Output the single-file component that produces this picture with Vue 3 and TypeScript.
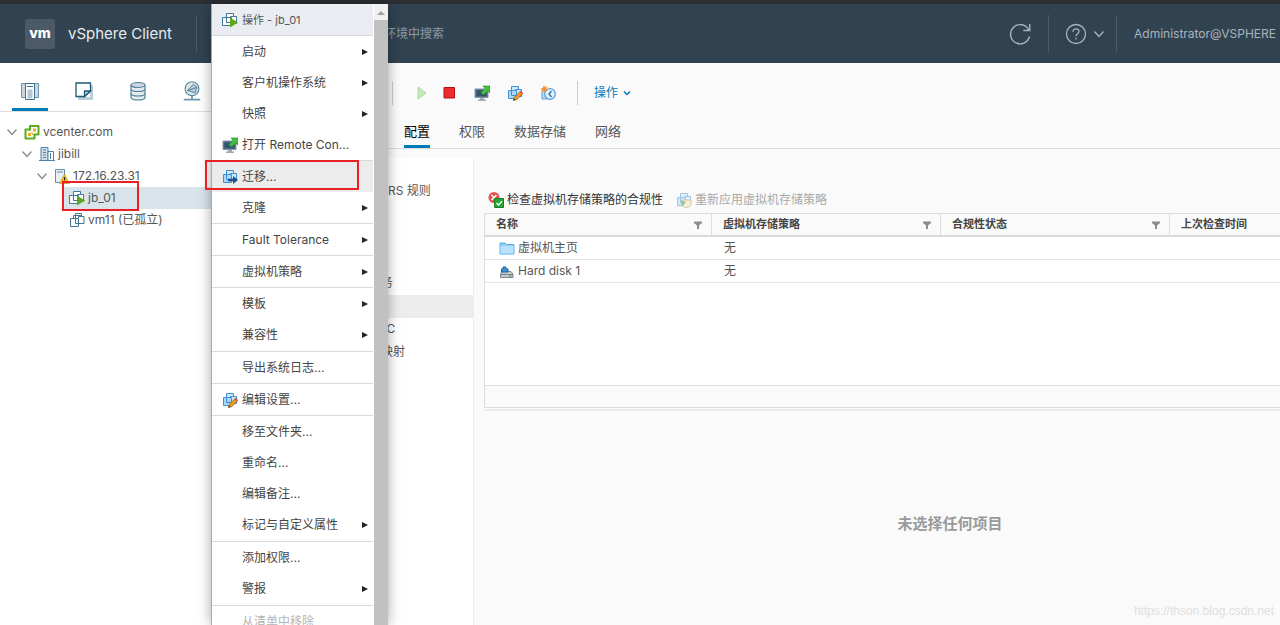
<script setup lang="ts">
import { ref } from 'vue'

interface MenuItem {
  label: string
  icon?: string
  sub?: boolean
  active?: boolean
  disabled?: boolean
}

interface MenuGroup {
  roomy?: boolean
  items: MenuItem[]
}

interface TreeNode {
  label: string
  icon: string
  depth: number
  open?: boolean
  selected?: boolean
}

const search = ref('')

const views = [
  { label: '主机和集群', icon: 'hosts', active: true },
  { label: '虚拟机和模板', icon: 'templates', active: false },
  { label: '存储', icon: 'storage', active: false },
  { label: '网络', icon: 'network', active: false },
]

const tree: TreeNode[] = [
  { label: 'vcenter.com', icon: 'vcenter', depth: 0, open: true },
  { label: 'jibill', icon: 'datacenter', depth: 1, open: true },
  { label: '172.16.23.31', icon: 'host-warn', depth: 2, open: true },
  { label: 'jb_01', icon: 'vm-on', depth: 3, selected: true },
  { label: 'vm11 (已孤立)', icon: 'vm', depth: 3 },
]

const menu: MenuGroup[] = [
  {
    items: [
      { label: '启动', sub: true },
      { label: '客户机操作系统', sub: true },
      { label: '快照', sub: true },
      { label: '打开 Remote Con...', icon: 'console' },
    ],
  },
  { items: [{ label: '迁移...', icon: 'migrate', active: true }, { label: '克隆', sub: true }] },
  { items: [{ label: 'Fault Tolerance', sub: true }] },
  { items: [{ label: '虚拟机策略', sub: true }] },
  { roomy: true, items: [{ label: '模板', sub: true }, { label: '兼容性', sub: true }] },
  { items: [{ label: '导出系统日志...' }] },
  { items: [{ label: '编辑设置...', icon: 'edit' }] },
  {
    roomy: true,
    items: [
      { label: '移至文件夹...' },
      { label: '重命名...' },
      { label: '编辑备注...' },
      { label: '标记与自定义属性', sub: true },
    ],
  },
  { roomy: true, items: [{ label: '添加权限...' }, { label: '警报', sub: true }] },
  { items: [{ label: '从清单中移除', disabled: true }] },
]

const tools = [
  { label: '启动', icon: 'play' },
  { label: '关闭', icon: 'stop' },
  { label: '控制台', icon: 'console' },
  { label: '编辑设置', icon: 'edit' },
  { label: '生成快照', icon: 'snapshot' },
]

const tabs = ['配置', '权限', '数据存储', '网络']

const settings = [
  'vSphere SDRS 规则',
  'vApp 选项',
  '',
  '警报定义',
  '已调度的任务',
  '策略',
  'VMware EVC',
  '客户机用户映射',
]

const columns = ['名称', '虚拟机存储策略', '合规性状态', '上次检查时间']

const rows = [
  { name: '虚拟机主页', icon: 'folder', policy: '无' },
  { name: 'Hard disk 1', icon: 'disk', policy: '无' },
]
</script>

<template>
  <svg class="sprite" aria-hidden="true">
    <symbol id="i-hosts" viewBox="0 0 20 20">
      <path d="M1.500 2.500h5v14h-5zM13.500 2.500h5v14h-5z" fill="#c9d8e1" stroke="#6d94aa" />
      <path d="M5.500 2.500h9v16h-9z" fill="#fff" stroke="#3f7290" />
      <path d="M7.500 8.500h5v9h-5z" fill="#b3c8d4" />
      <path d="M7 5.500h6" stroke="#3f7290" />
    </symbol>
    <symbol id="i-templates" viewBox="0 0 20 20">
      <path d="M16 4h3v15h-15v-3h12z" fill="#bccdd7" />
      <path d="M2 2h14.500v8l-6 5.500h-8.500z" fill="#fff" stroke="#1f5876" stroke-width="1.300" />
      <path d="M16.500 10h-6v5.500z" fill="#bccdd7" stroke="#1f5876" stroke-width="1.300" />
    </symbol>
    <symbol id="i-storage" viewBox="0 0 20 20">
      <path d="M3 4v12.500c0 1.500 3 2.500 7 2.500s7-1 7-2.500v-12.500" fill="#e3ebf0" stroke="#55829b" stroke-width="1.200" />
      <ellipse cx="10" cy="4" rx="7" ry="2.500" fill="#c9d8e1" stroke="#55829b" stroke-width="1.200" />
      <path d="M3 8c0 1.500 3 2.500 7 2.500s7-1 7-2.500M3 12.500c0 1.500 3 2.500 7 2.500s7-1 7-2.500" fill="none" stroke="#55829b" stroke-width="1.200" />
    </symbol>
    <symbol id="i-network" viewBox="0 0 20 22">
      <circle cx="10" cy="8.500" r="7.600" fill="#dfe8ee" stroke="#55829b" stroke-width="1.200" />
      <path d="M5 10.500l6.500-7 4 3.500zM5 10.500l8.500 2.500 2-6" fill="#b9cdd8" stroke="#4a7a94" />
      <path d="M10 16v4M1 20.500h18" stroke="#6f95aa" stroke-width="2" />
    </symbol>
    <symbol id="i-vcenter" viewBox="0 0 16 16">
      <path d="M6 2h8.500v8.500h-4v4h-9v-9h4.500z" fill="#fff" stroke="#5cae1c" stroke-width="2" stroke-linejoin="round" />
      <path d="M6 5.500v2M8.500 10.500h2" fill="none" stroke="#5cae1c" />
      <path d="M9 4.500h3v3h-3zM4 9h3v3h-3z" fill="#f5a623" />
      <path d="M7 8h2v2h-2z" fill="#f9c878" />
    </symbol>
    <symbol id="i-datacenter" viewBox="0 0 16 16">
      <path d="M2 1.500h7v13h-7z" fill="#cfdee8" stroke="#4f83a0" />
      <path d="M9 5.500h5.500v9h-5.500z" fill="#fff" stroke="#4f83a0" />
      <path d="M4 4h3M4 6.500h3M4 9h3M4 11.500h3M11.500 7v6" stroke="#4f83a0" />
      <path d="M0 14.500h16" stroke="#4f83a0" />
    </symbol>
    <symbol id="i-host-warn" viewBox="0 0 16 16">
      <path d="M1.500 1.500h9v13h-9z" fill="#e6eff4" stroke="#5f8fa9" />
      <path d="M3 4h6" stroke="#5f8fa9" />
      <path d="M10.500 6l5 9.500h-10z" fill="#ffc61a" stroke="#c48a00" stroke-width=".6" />
      <path d="M10.500 9v3.500M10.500 13.300v1.200" stroke="#222" stroke-width="1.200" />
    </symbol>
    <symbol id="i-vm" viewBox="0 0 16 16">
      <path d="M6.500 1.500h6v3h2.500v7h-8.500z" fill="#fff" stroke="#3f7795" />
      <path d="M1.500 6.500h8v8h-8z" fill="#fff" stroke="#3f7795" />
      <path d="M4.500 6.500v-3h7.500M6.500 6.500v5h3M12.500 4.500h-3v3" fill="none" stroke="#3f7795" />
    </symbol>
    <symbol id="i-vm-on" viewBox="0 0 16 16">
      <path d="M4.500 1.500h7v3h3v7h-10z" fill="#fff" stroke="#3f7795" />
      <path d="M.5 5.500h9v8h-9z" fill="#fff" stroke="#3f7795" />
      <path d="M4.500 5.500v5h5M8.500 5.500v-1h3" fill="none" stroke="#3f7795" />
      <path d="M8 5.500l8 5-8 5z" fill="#5fa51e" />
    </symbol>
    <symbol id="i-console" viewBox="0 0 16 16">
      <path d="M1 4h13v8.500h-13z" fill="#526b82" stroke="#8395a5" />
      <path d="M2.500 5.500h10v5.500h-10z" fill="#33536f" />
      <path d="M6 13h4v1.500h2v1.500h-8v-1.500h2z" fill="#9caab6" />
      <path d="M9 1h7v7l-2.200-2.200-4.300 4.200-2.500-2.500 4.200-4.200z" fill="#3fc43a" stroke="#1f8f1f" stroke-width=".7" />
    </symbol>
    <symbol id="i-vmblue" viewBox="0 0 16 16">
      <path d="M4.500 1.500h7v3h3v7h-10z" fill="#cfe8fb" stroke="#3d8fd8" />
      <path d="M1.500 5.500h8v8h-8z" fill="#aed8f8" stroke="#3d8fd8" />
      <path d="M4.500 5.500v5h5M8.500 5.500v-1h3" fill="none" stroke="#3d8fd8" />
    </symbol>
    <symbol id="i-edit" viewBox="0 0 16 16">
      <use href="#i-vmblue" />
      <path d="M6.500 15.500l.8-3.200 6-6 2.400 2.400-6 6z" fill="#f39a1e" stroke="#7a4a10" stroke-width=".6" />
      <path d="M12.500 7l2.300 2.300 1.200-1.200-2.300-2.300z" fill="#e0474c" />
      <path d="M6.500 15.500l.5-1.800 1.300 1.300z" fill="#222" />
    </symbol>
    <symbol id="i-migrate" viewBox="0 0 16 16">
      <use href="#i-vmblue" />
      <path d="M6 9.800h5v-2.800l5 4-5 4v-2.800h-5z" fill="#1d4f91" />
    </symbol>
    <symbol id="i-snapshot" viewBox="0 0 16 16">
      <path d="M2 5h5v9h-5z" fill="#b9dcf8" stroke="#5b9fdc" />
      <circle cx="10" cy="9" r="5.300" fill="#e2f1fd" stroke="#5b9fdc" stroke-width="1.300" />
      <path d="M11.500 6l-2.500 3 2.500 3" fill="none" stroke="#2d6dab" stroke-width="1.300" />
      <path d="M4 0l1 2.200 2.400-.8-1 2.300 2 1.300-2.500.6-.4 2.400-1.600-1.900-2.200 1 .7-2.300-2-1.300 2.400-.5z" fill="#f5912c" />
    </symbol>
    <symbol id="i-play" viewBox="0 0 16 16">
      <path d="M4 2l8 6-8 6z" fill="#c4e9bd" stroke="#a9d8a2" />
    </symbol>
    <symbol id="i-stop" viewBox="0 0 16 16">
      <path d="M3 2.500h10.500v10.500h-10.500z" fill="#ee2a2a" stroke="#b01212" />
    </symbol>
    <symbol id="i-check" viewBox="0 0 16 16">
      <circle cx="6" cy="5.500" r="5.500" fill="#ea4f4f" />
      <path d="M3.500 3l5 5M8.500 3l-5 5" stroke="#fff" stroke-width="1.500" />
      <path d="M6.500 6.500h9v9h-9z" fill="#27a736" stroke="#148022" />
      <path d="M8.500 11l2 2 3.500-3.700" fill="none" stroke="#fff" stroke-width="1.400" />
    </symbol>
    <symbol id="i-reapply" viewBox="0 0 16 16">
      <g opacity=".5">
        <use href="#i-vmblue" />
        <path d="M6 8h9v4c0 2-2 3.500-4.500 3.500s-4.500-1.500-4.500-3.500z" fill="#f3e3b0" stroke="#a8935a" />
        <path d="M5 8l5 2-4 5z" fill="#3c9a3c" />
      </g>
    </symbol>
    <symbol id="i-folder" viewBox="0 0 16 16">
      <path d="M1 3h5l1.500 1.500h7.500v9.500h-14z" fill="#8fcdf5" stroke="#5baee6" />
      <path d="M1.500 6h13v7.500h-13z" fill="#b9e1fb" />
    </symbol>
    <symbol id="i-disk" viewBox="0 0 16 16">
      <path d="M3 8.500h9l2 2.500v3.500h-12.500v-3.500z" fill="#c6cbd0" stroke="#7b848c" />
      <path d="M2 11.500h12" stroke="#7b848c" />
      <path d="M10 13h2.500" stroke="#3fa53f" />
      <path d="M4 4h3v2h2v3h-6.500v-3h1.500z" fill="#3d8fd8" stroke="#1f62a8" />
    </symbol>
    <symbol id="i-chevron" viewBox="0 0 12 12">
      <path d="M1.500 3.500l4.500 5 4.500-5" fill="none" stroke="currentColor" stroke-width="1.300" />
    </symbol>
    <symbol id="i-chevron-bold" viewBox="0 0 8 8">
      <path d="M1 2.500l3 3 3-3" fill="none" stroke="currentColor" stroke-width="1.500" />
    </symbol>
    <symbol id="i-filter" viewBox="0 0 8 8">
      <path d="M0 0.500h8v1.500l-3 2.500v3.500h-2v-3.500l-3-2.500z" fill="#8c8c8c" />
    </symbol>
  </svg>

  <div class="page">
    <header class="top">
      <div class="logo">vm</div>
      <div class="brand">vSphere Client</div>
      <input v-model="search" class="search" type="search" aria-label="搜索" placeholder="在所有环境中搜索" />
      <button class="top-btn refresh" aria-label="刷新">
        <svg width="22" height="22" viewBox="0 0 22 22" fill="none" stroke="currentColor" stroke-width="1.400">
          <path d="M20.500 13.500a9.600 9.600 0 1 1-.7-6.500M20.800 1v6.500h-6.500" />
        </svg>
      </button>
      <button class="top-btn help" aria-label="帮助">
        <svg width="22" height="22" viewBox="0 0 22 22" fill="none" stroke="currentColor" stroke-width="1.300">
          <circle cx="11" cy="11" r="9.500" />
          <path d="M8 8.700c0-1.800 1.300-2.900 3-2.900s3 1.100 3 2.700c0 2.200-3 2.300-3 4.800M11 14.800v1.700" />
        </svg>
        <svg width="12" height="12"><use href="#i-chevron" /></svg>
      </button>
      <button class="user">Administrator@VSPHERE</button>
    </header>

    <div class="body">
      <aside class="side">
        <nav class="views">
          <button v-for="v in views" :key="v.icon" :class="['view', { on: v.active }]" :aria-label="v.label">
            <svg width="20" height="20"><use :href="'#i-' + v.icon" /></svg>
          </button>
        </nav>
        <ul class="tree">
          <li v-for="n in tree" :key="n.label" :class="['node', 'd' + n.depth, { sel: n.selected }]">
            <svg v-if="n.open" class="twist" width="12" height="12"><use href="#i-chevron" /></svg>
            <svg width="16" height="16"><use :href="'#i-' + n.icon" /></svg>
            <a href="#">{{ n.label }}</a>
          </li>
        </ul>
      </aside>

      <main class="main">
        <div class="tools">
          <button v-for="t in tools" :key="t.icon" class="tool" :aria-label="t.label">
            <svg width="16" height="16"><use :href="'#i-' + t.icon" /></svg>
          </button>
          <button class="actions">
            操作
            <svg width="8" height="8"><use href="#i-chevron-bold" /></svg>
          </button>
        </div>
        <nav class="tabs">
          <a v-for="(t, i) in tabs" :key="t" href="#" :class="{ on: i === 0 }">{{ t }}</a>
        </nav>
        <div class="config">
          <ul class="settings">
            <li v-for="(s, i) in settings" :key="i" :class="{ sel: s === '策略' }">{{ s }}</li>
          </ul>
          <section class="policy">
            <div class="policy-tools">
              <button>
                <svg width="16" height="16"><use href="#i-check" /></svg>
                检查虚拟机存储策略的合规性
              </button>
              <button disabled>
                <svg width="16" height="16"><use href="#i-reapply" /></svg>
                重新应用虚拟机存储策略
              </button>
            </div>
            <div class="grid">
              <table>
                <colgroup>
                  <col class="c1" />
                  <col class="c2" />
                  <col class="c2" />
                  <col />
                </colgroup>
                <thead>
                  <tr>
                    <th v-for="(c, i) in columns" :key="c">
                      <div class="th">
                        {{ c }}
                        <svg v-if="i < 3" width="8" height="8"><use href="#i-filter" /></svg>
                      </div>
                    </th>
                  </tr>
                </thead>
                <tbody>
                  <tr v-for="r in rows" :key="r.name">
                    <td>
                      <div class="name">
                        <svg width="16" height="16"><use :href="'#i-' + r.icon" /></svg>
                        {{ r.name }}
                      </div>
                    </td>
                    <td>{{ r.policy }}</td>
                    <td></td>
                    <td></td>
                  </tr>
                </tbody>
              </table>
              <div class="grid-foot"></div>
            </div>
            <div class="empty">未选择任何项目</div>
          </section>
        </div>
      </main>
    </div>

    <div class="menu">
      <div class="menu-list">
        <div class="menu-head">
          <svg width="16" height="16"><use href="#i-vm-on" /></svg>
          操作 - jb_01
        </div>
        <ul v-for="(g, gi) in menu" :key="gi" :class="['group', { roomy: g.roomy }]">
          <li v-for="m in g.items" :key="m.label">
            <button :class="['item', { active: m.active }]" :disabled="m.disabled">
              <span class="item-icon">
                <svg v-if="m.icon" width="16" height="16"><use :href="'#i-' + m.icon" /></svg>
              </span>
              <span class="item-label">{{ m.label }}</span>
              <svg v-if="m.sub" width="6" height="6" viewBox="0 0 6 6"><path d="M0 0l6 3-6 3z" fill="#222" /></svg>
            </button>
          </li>
        </ul>
      </div>
      <div class="bar">
        <svg width="14" height="16" viewBox="0 0 14 16"><path d="M3 11l4-4 4 4z" fill="#a0a0a0" /></svg>
        <div class="thumb"></div>
      </div>
    </div>

    <div class="mark mark-node"></div>
    <div class="mark mark-item"></div>
    <div class="watermark">https://thson.blog.csdn.net</div>
  </div>
</template>

<style>
body {
  margin: 0;
}
</style>

<style scoped>
.sprite {
  position: absolute;
  width: 0;
  height: 0;
}
.page {
  position: relative;
  display: flex;
  flex-direction: column;
  height: 100vh;
  overflow: hidden;
  background: #fafafa;
  color: #565656;
  font: 12px/22px Inter, "Noto Sans CJK SC", sans-serif;
}
svg {
  flex: none;
  display: block;
}
ul {
  list-style: none;
  margin: 0;
  padding: 0;
}
a {
  color: inherit;
  text-decoration: none;
}
button {
  display: flex;
  align-items: center;
  margin: 0;
  padding: 0;
  border: 0;
  background: none;
  color: inherit;
  font: inherit;
  white-space: nowrap;
}

.top {
  display: flex;
  align-items: center;
  flex: none;
  height: 59px;
  border-top: 4px solid #2c2f33;
  background: #314351;
  color: #a9b4bc;
}
.logo {
  width: 30px;
  height: 30px;
  margin-left: 25px;
  border-radius: 3px;
  background: #4c5a67;
  color: #fff;
  font-size: 14px;
  font-weight: 800;
  line-height: 28px;
  text-align: center;
}
.brand {
  width: 128px;
  margin-left: 13px;
  border-right: 1px solid #4b5c69;
  color: #e6eaed;
  font-size: 15px;
  line-height: 37px;
}
.search {
  flex: 1;
  min-width: 0;
  margin-left: 151px;
  padding: 0;
  border: 0;
  outline: 0;
  background: none;
  color: #a9b4bc;
  font: inherit;
}
.search::placeholder {
  color: #8f9ba5;
  opacity: 1;
}
.top-btn {
  height: 37px;
  border-right: 1px solid #4b5c69;
}
.refresh {
  padding-right: 17px;
}
.help {
  gap: 6px;
  padding: 0 11px 0 16px;
}
.user {
  width: 163px;
  padding-left: 17px;
  overflow: hidden;
}

.body {
  display: flex;
  flex: 1;
  min-height: 0;
}
.side {
  flex: none;
  width: 212px;
  background: #fff;
}
.views {
  display: flex;
  gap: 18px;
  height: 48px;
  padding-left: 12px;
  border-bottom: 1px solid #dcdcdc;
}
.view {
  justify-content: center;
  width: 36px;
  padding-top: 10px;
  border-bottom: 3px solid transparent;
}
.view.on {
  border-bottom-color: #007cbb;
}
.tree {
  padding-top: 9px;
}
.node {
  display: flex;
  align-items: center;
  gap: 3px;
}
.twist {
  margin-right: 3px;
  color: #8a8a8a;
}
.d0 {
  padding-left: 6px;
}
.d1 {
  padding-left: 21px;
}
.d2 {
  padding-left: 36px;
}
.d3 {
  margin-left: 63px;
  padding-left: 6px;
}
.node.sel {
  background: #d9e4ea;
}

.main {
  display: flex;
  flex: 1;
  flex-direction: column;
  min-width: 0;
}
.tools {
  display: flex;
  align-items: center;
  gap: 17px;
  height: 24px;
  margin: 18px 0 0 180px;
  padding-left: 21px;
  border-left: 1px solid #ccc;
}
.tool:nth-child(2) {
  margin-left: -6px;
}
.actions {
  gap: 5px;
  height: 24px;
  margin-left: 4px;
  padding-left: 16px;
  border-left: 1px solid #ccc;
  color: #007cbb;
}
.tabs {
  display: flex;
  flex: none;
  gap: 29px;
  margin-top: 12px;
  padding-left: 192px;
  border-bottom: 1px solid #dcdcdc;
  font-size: 13px;
  line-height: 28px;
}
.tabs a {
  border-bottom: 3px solid transparent;
}
.tabs a.on {
  border-bottom-color: #007cbb;
  color: #000;
}
.config {
  display: flex;
  flex: 1;
  min-height: 0;
  padding-top: 9px;
}
.settings {
  flex: none;
  width: 152px;
  padding: 22px 0 0 109px;
  border-right: 1px solid #eee;
  background: #fff;
}
.settings li {
  height: 23px;
  white-space: nowrap;
}
.settings .sel {
  background: #ececec;
}
.policy {
  display: flex;
  flex: 1;
  flex-direction: column;
  min-width: 0;
  padding: 31px 0 0 10px;
}
.policy-tools {
  display: flex;
  gap: 13px;
  padding: 0 0 2px 4px;
  color: #333;
}
.policy-tools button {
  gap: 3px;
}
.policy-tools button:disabled {
  color: #a8a8a8;
}
.grid {
  display: flex;
  flex-direction: column;
  height: 193px;
  border: 1px solid #ddd;
  border-width: 1px 0 1px 1px;
  background: #fff;
}
table {
  width: 100%;
  border-collapse: separate;
  border-spacing: 0;
  table-layout: fixed;
}
.c1 {
  width: 227px;
}
.c2 {
  width: 229px;
}
th {
  padding: 0;
  border-right: 1px solid #ddd;
  border-bottom: 2px solid #dadada;
  background: #fafafa;
  color: #444;
  font-size: 11px;
  line-height: 21px;
}
th:last-child {
  border-right: 0;
}
.th {
  display: flex;
  align-items: center;
  justify-content: space-between;
  padding: 0 9px 0 11px;
}
td {
  height: 22px;
  padding: 0 0 0 12px;
  border-bottom: 1px solid #e6e6e6;
}
.name {
  display: flex;
  align-items: center;
  gap: 3px;
  margin-left: 2px;
}
.grid-foot {
  height: 21px;
  margin-top: auto;
  border-top: 1px solid #ddd;
  background: #fafafa;
}
.empty {
  display: flex;
  flex: 1;
  align-items: center;
  justify-content: center;
  margin-top: 1px;
  padding: 12px 0 0 136px;
  border-top: 2px solid #ececec;
  color: #999;
  font-size: 15px;
  font-weight: 700;
}

.menu {
  position: absolute;
  top: 4px;
  bottom: 0;
  left: 211px;
  display: flex;
  width: 176px;
  border-left: 1px solid #aaa;
  background: #fff;
  box-shadow: 0 0 12px rgba(0, 0, 0, 0.35);
}
.menu-list {
  flex: 1;
  overflow: hidden;
}
.menu-head {
  display: flex;
  align-items: center;
  gap: 4px;
  height: 31px;
  padding-left: 10px;
  border-bottom: 1px solid #d9d9d9;
  background: #e9edf1;
  font-size: 11px;
}
.group {
  border-bottom: 1px solid #d9d9d9;
}
.roomy {
  padding-bottom: 1px;
}
.item {
  width: 100%;
  height: 31px;
  padding: 0 5px 0 10px;
  color: #444;
  text-align: left;
}
.item.active {
  background: #ececec;
}
.item:disabled {
  color: #b5b5b5;
}
.item-icon {
  width: 20px;
}
.item-label {
  flex: 1;
}
.bar {
  display: flex;
  flex-direction: column;
  width: 14px;
  margin-left: 1px;
  background: #f1f1f1;
}
.thumb {
  flex: 1;
  background: #c1c1c1;
}

.mark {
  position: absolute;
  box-sizing: border-box;
  border: 2px solid #ea1f27;
  pointer-events: none;
}
.mark-node {
  top: 181px;
  left: 62px;
  width: 77px;
  height: 30px;
}
.mark-item {
  top: 160px;
  left: 205px;
  width: 154px;
  height: 30px;
}
.watermark {
  position: absolute;
  right: 6px;
  bottom: 3px;
  color: #e0e0e0;
  font-family: "Liberation Sans", sans-serif;
}
</style>
